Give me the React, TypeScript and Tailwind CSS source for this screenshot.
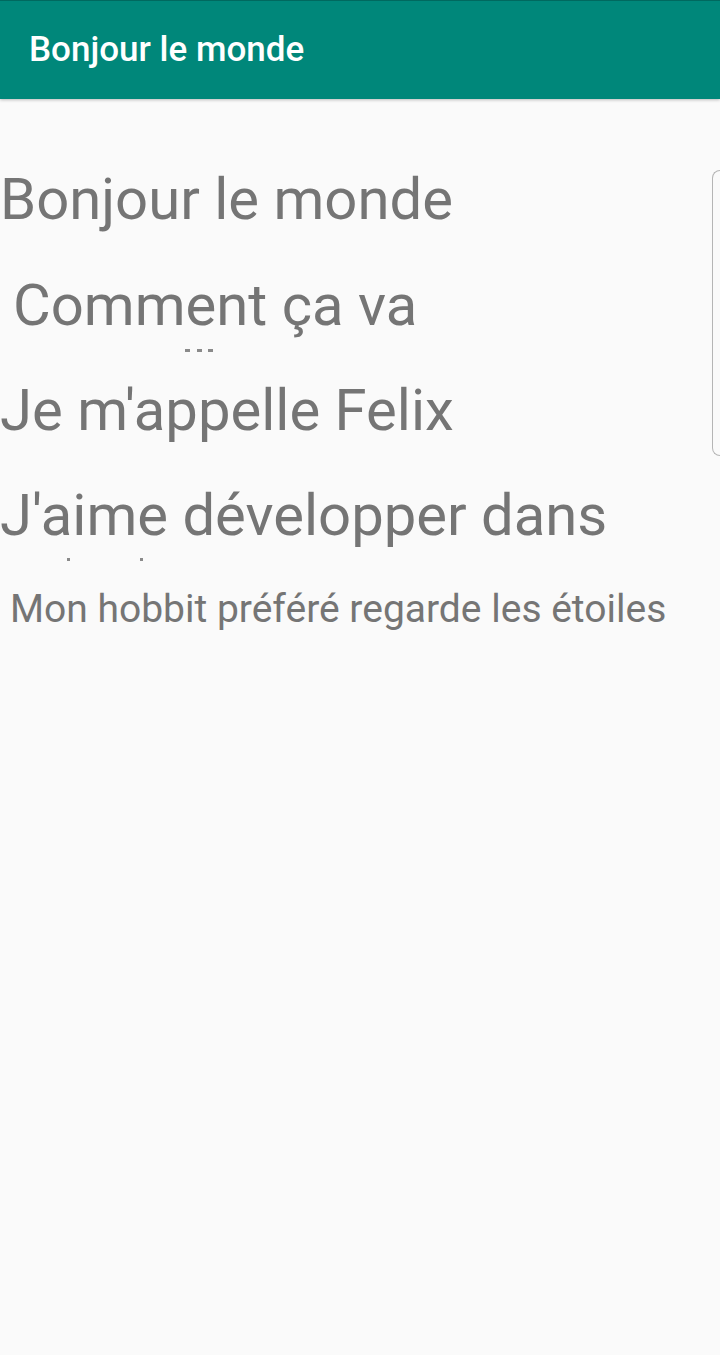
import React from 'react';

const font = { fontFamily: 'Roboto, "Noto Sans", sans-serif' };

function Marks({ items }: { items: { x: number; w: number }[] }) {
  return (
    <div className="relative h-[4px]">
      {items.map((m, i) => (
        <span
          key={i}
          className="absolute top-0 h-[3px] bg-[#8a8a8a]"
          style={{ left: m.x, width: m.w }}
        />
      ))}
    </div>
  );
}

export default function App() {
  return (
    <div className="min-h-[1355px] w-[720px] bg-[#fafafa]" style={font}>
      <header className="h-[99px] border-t border-[#00695f] bg-[#00877a] shadow-[0_1px_3px_rgba(0,0,0,0.25)] flex items-center pl-[29px]">
        <h1 className="text-[35px] font-medium text-white leading-none -mt-[2px]">
          Bonjour le monde
        </h1>
      </header>

      <div className="flex justify-between">
        <div className="flex flex-col pt-[65px] text-[#757575]">
          <div className="h-[106px] overflow-hidden">
            <p className="text-[58px] leading-[70px]">Bonjour le monde</p>
          </div>
          <div className="h-[105px]">
            <p className="text-[58px] leading-[70px] pl-[13px]">Comment ça va</p>
            <div className="mt-[9px]">
              <Marks items={[{ x: 185, w: 5 }, { x: 197, w: 5 }, { x: 208, w: 5 }]} />
            </div>
          </div>
          <div className="h-[105px] overflow-hidden">
            <p className="text-[58px] leading-[70px]">Je m'appelle Felix</p>
          </div>
          <div className="h-[105px]">
            <p className="text-[58px] leading-[70px]">J'aime développer dans</p>
            <div className="mt-[8px]">
              <Marks items={[{ x: 67, w: 3 }, { x: 140, w: 3 }]} />
            </div>
          </div>
          <p className="text-[39px] leading-[46px] pl-[10px] mt-[1px]">
            Mon hobbit préféré regarde les étoiles
          </p>
        </div>

        <div className="mt-[71px] h-[286px] w-[8px] rounded-l-[8px] border-y border-l border-[#b5b5b5]" />
      </div>
    </div>
  );
}
